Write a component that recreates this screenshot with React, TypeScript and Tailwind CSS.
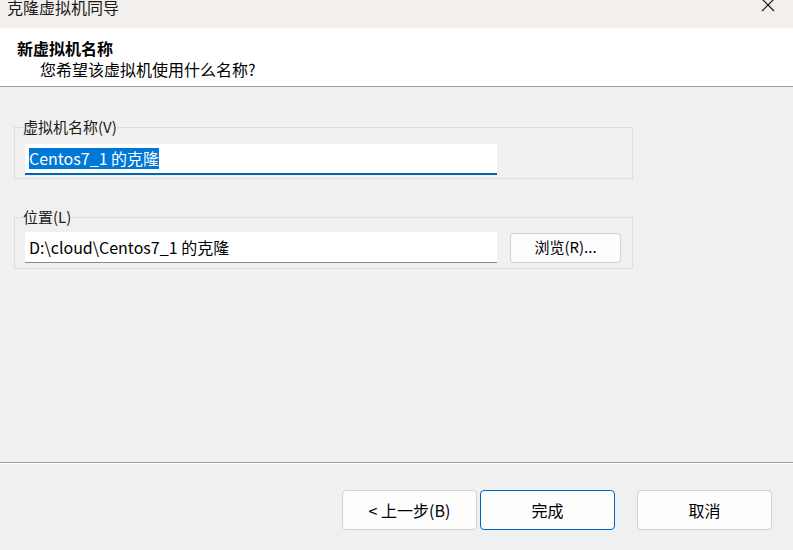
const font = { fontFamily: '"Noto Sans CJK SC", "Liberation Sans", sans-serif' }

export default function App() {
  return (
    <div className="w-[793px] h-[550px] flex flex-col bg-[#f0f0f0] text-black overflow-hidden" style={font}>
      {/* Title bar */}
      <div className="h-[28px] shrink-0 bg-[#f3efed] flex items-start justify-between overflow-hidden">
        <span className="ml-[7px] -mt-[4px] text-[16px] leading-[22px] text-[#1a1a1a]">克隆虚拟机同导</span>
        <svg className="mr-[18px] -mt-[2px]" width="14" height="14" viewBox="0 0 14 14">
          <path d="M1 1 L13 13 M13 1 L1 13" stroke="#1a1a1a" strokeWidth="1.2" />
        </svg>
      </div>

      {/* Header */}
      <div className="h-[59px] shrink-0 bg-white border-b border-[#a0a0a0] pl-[17px] pt-[10px]">
        <div className="text-[16px] font-bold leading-[21px]">新虚拟机名称</div>
        <div className="text-[16px] leading-[21px] pl-[23px]">您希望该虚拟机使用什么名称?</div>
      </div>

      {/* Body */}
      <div className="flex-1 flex flex-col pl-[14px] pt-[31px]">
        <fieldset className="w-[619px] h-[61px] border border-[#dcdcdc] pl-[10px] m-0 p-0">
          <legend className="text-[15px] leading-[18px] text-[#1a1a1a] -ml-[2px]">虚拟机名称(V)</legend>
          <div className="w-[472px] h-[31px] bg-white border-b-2 border-[#0063b1] flex items-center pl-[4px] mt-[8px]">
            <span className="bg-[#0078d7] text-white text-[16px] leading-[21px]">Centos7_1 的克隆</span>
          </div>
        </fieldset>

        <fieldset className="w-[619px] h-[61px] border border-[#dcdcdc] pl-[10px] m-0 p-0 mt-[29px]">
          <legend className="text-[15px] leading-[18px] text-[#1a1a1a] -ml-[2px]">位置(L)</legend>
          <div className="flex items-center gap-[13px] mt-[6px]">
            <div className="w-[472px] h-[31px] bg-white border-b border-[#8a8a8a] flex items-center pl-[4px] text-[16px]">
              D:\cloud\Centos7_1 的克隆
            </div>
            <button className="w-[111px] h-[30px] bg-[#fdfdfd] border border-[#d0d0d0] rounded-[4px] text-[15px]">浏览(R)...</button>
          </div>
        </fieldset>
      </div>

      {/* Footer */}
      <div className="h-[88px] shrink-0 border-t border-[#a0a0a0] shadow-[inset_0_1px_0_#ffffff] flex items-start pt-[27px] pl-[342px]">
        <button className="w-[135px] h-[40px] bg-[#fdfdfd] border border-[#d0d0d0] rounded-[4px] text-[16px]">&lt; 上一步(B)</button>
        <button className="ml-[3px] w-[135px] h-[40px] bg-[#fdfdfd] border border-[#0067c0] rounded-[4px] text-[16px]">完成</button>
        <button className="ml-[22px] w-[135px] h-[40px] bg-[#fdfdfd] border border-[#d0d0d0] rounded-[4px] text-[16px]">取消</button>
      </div>
    </div>
  )
}
